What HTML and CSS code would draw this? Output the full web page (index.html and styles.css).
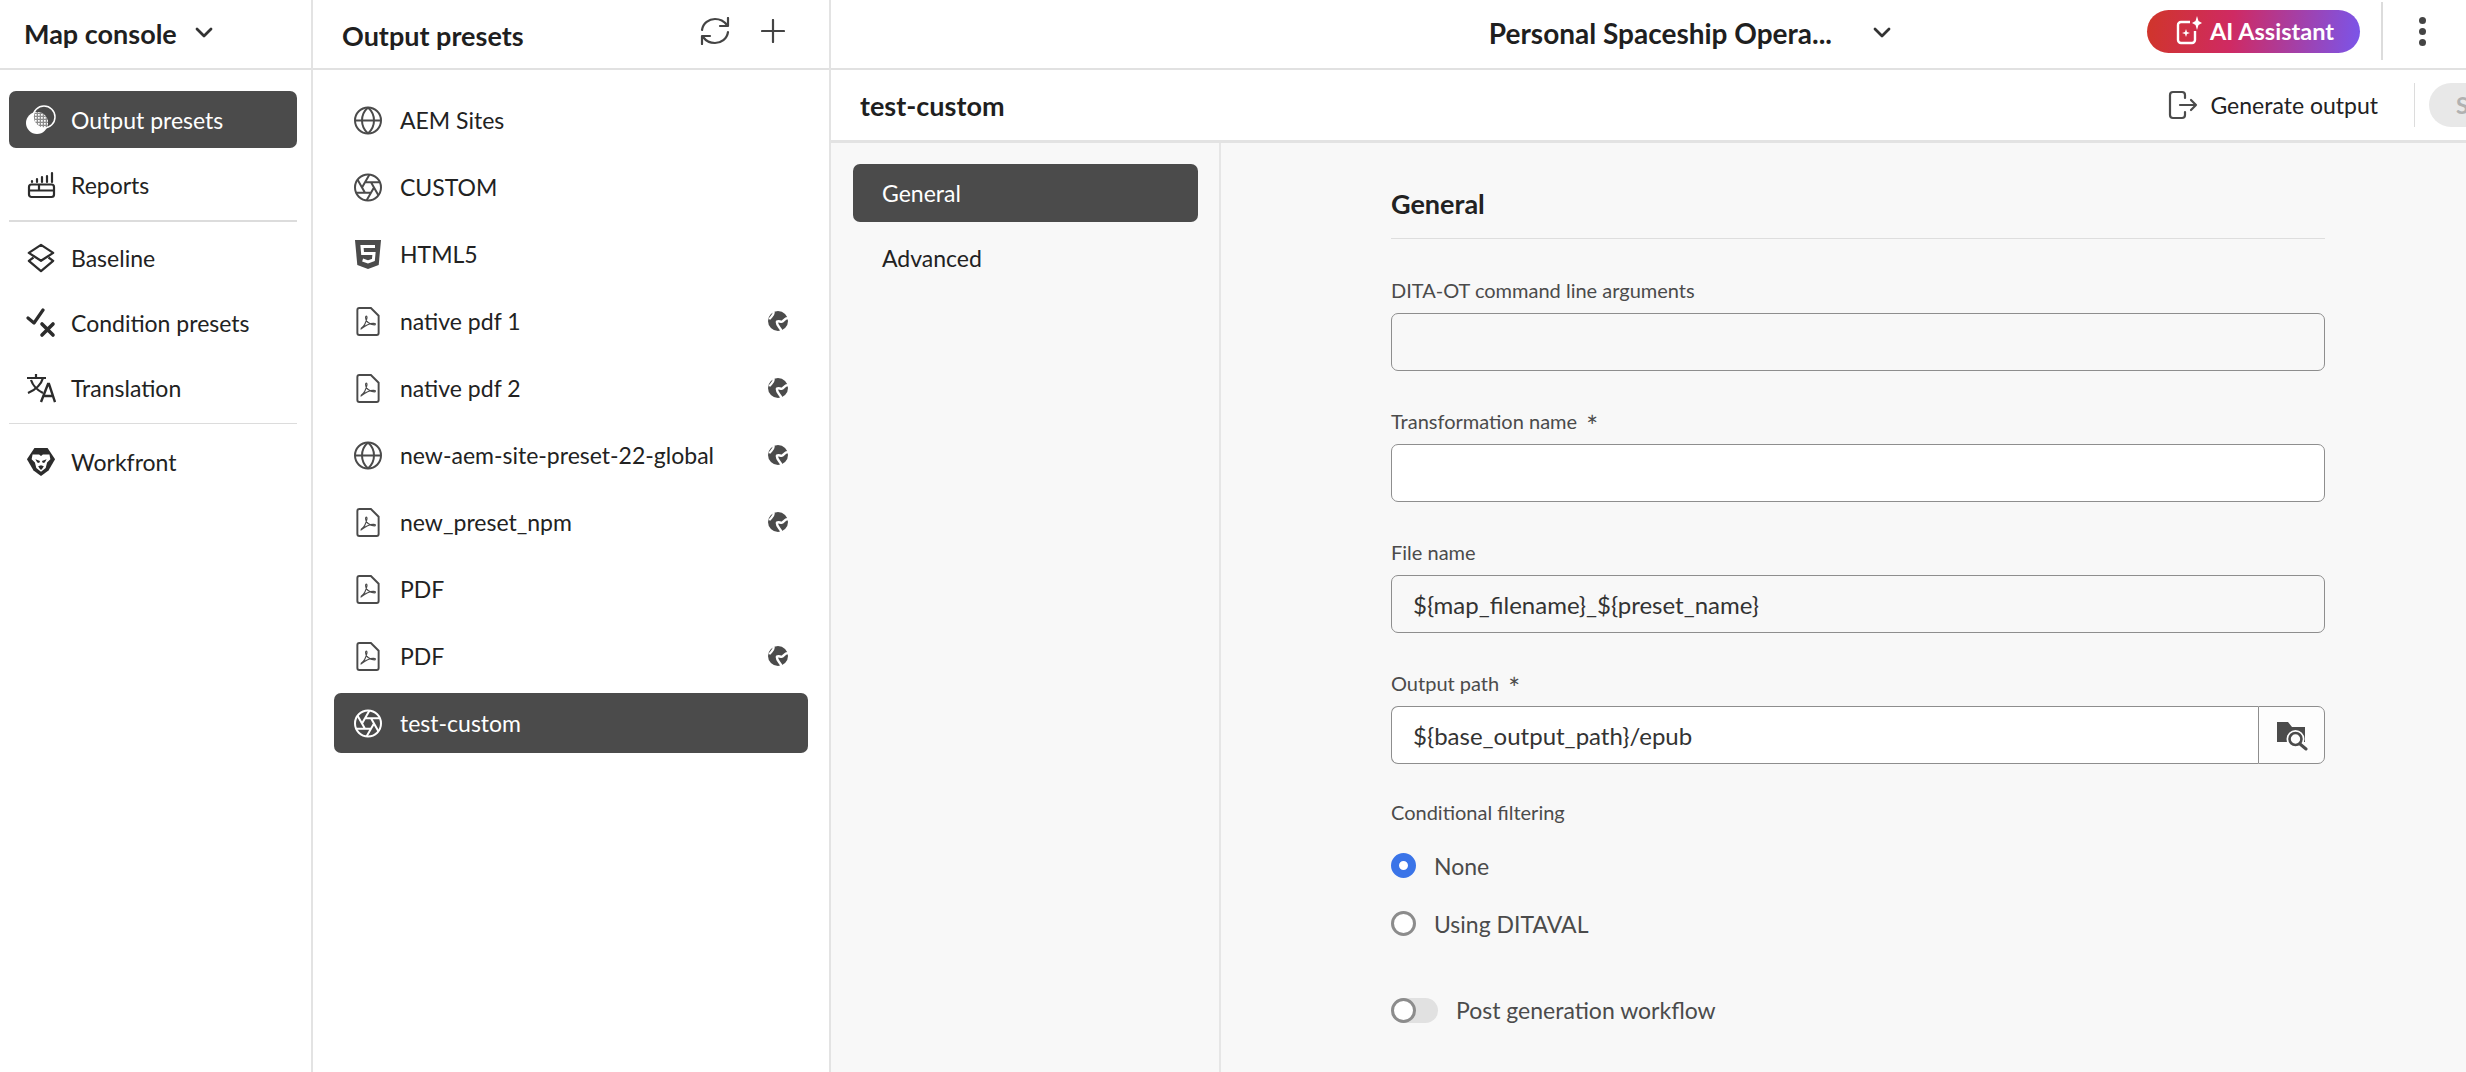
FILE: index.html
```html
<!DOCTYPE html>
<html lang="en">
<head>
  <meta charset="UTF-8" />
  <title>Output presets</title>
  <link rel="stylesheet" href="styles.css">
</head>
<body>

  <!-- Shared icons -->
  <svg class="defs" width="0" height="0">
    <defs>
      <pattern id="dots" width="3" height="3" patternUnits="userSpaceOnUse"><rect width="3" height="3" fill="#8d8d8d"/><rect width="1.700" height="1.700" fill="#fff"/></pattern>
      <clipPath id="lens"><circle cx="18" cy="12" r="11"/></clipPath>
    </defs>
    <symbol id="i-globe" viewBox="0 0 28 28">
      <g fill="none" stroke="currentColor" stroke-width="2">
        <circle cx="14" cy="14" r="13"/><path d="M1 14h26M14 1c-8 7-8 19 0 26M14 1c8 7 8 19 0 26"/>
      </g>
    </symbol>
    <symbol id="i-aperture" viewBox="0 0 28 28">
      <g fill="none" stroke="currentColor" stroke-width="2">
        <circle cx="14" cy="14" r="13"/>
        <path d="M20 14L12.500 26.900M17 19.200H2.100M11 19.200L3.600 6.300M8 14L15.500 1.100M11 8.800H25.900M17 8.800L24.400 21.700"/>
      </g>
    </symbol>
    <symbol id="i-html" viewBox="0 0 26 29">
      <path fill="currentColor" d="M0 0h26l-2.300 25L13 29 2.300 25z"/>
      <path fill="none" stroke="#fff" stroke-width="3" d="M20 6.500H7l.6 7H19l-.6 6.500-5.400 1.800-5.400-1.800"/>
    </symbol>
    <symbol id="i-pdf" viewBox="0 0 24 30">
      <path fill="none" stroke="currentColor" stroke-width="2" d="M3 1h12l8 8v18a2 2 0 0 1-2 2H3a2 2 0 0 1-2-2V3a2 2 0 0 1 2-2z"/>
      <path fill="none" stroke="currentColor" stroke-width="1.200" d="M5 22c3-2 5-6 6-11 0-2-1.500-2-1.500 0 0 4 4 7 9 7.500 1.500 0 1.500-1.500 0-1.500-4-.5-9 2-13.500 5.500z"/>
    </symbol>
    <symbol id="i-earth" viewBox="0 0 20 20">
      <circle cx="10" cy="10" r="10" fill="currentColor"/>
      <g fill="none" stroke="#fff" stroke-linecap="round">
        <path stroke-width="2.200" d="M5.500 1C6.500 3 4 5 2 7.500"/>
        <path stroke-width="2.400" d="M13.500 20C12 16 8 14 9 10.500c2-1 4 1 5.500 0S17 7 20.500 7"/>
      </g>
    </symbol>
    <symbol id="i-chevron" viewBox="0 0 18 12">
      <path fill="none" stroke="currentColor" stroke-width="2.800" stroke-linecap="round" stroke-linejoin="round" d="M2 2l7 7 7-7"/>
    </symbol>
  </svg>

  <!-- Map console nav -->
  <nav class="nav">
    <div class="nav-head">
      <span class="nav-title">Map console</span>
      <svg class="chev"><use href="#i-chevron"/></svg>
    </div>
    <div class="nav-items">
      <a class="nav-item active">
        <svg class="nav-icon" viewBox="0 0 30 30">
          <circle cx="11" cy="18" r="11" fill="#fff"/>
          <circle cx="11" cy="18" r="11" fill="url(#dots)" clip-path="url(#lens)"/>
          <circle cx="18" cy="12" r="11" fill="none" stroke="#fff" stroke-width="1.500"/>
        </svg>
        Output presets
      </a>
      <a class="nav-item">
        <svg class="nav-icon" viewBox="0 0 30 30">
          <path fill="none" stroke="currentColor" stroke-width="2.200" stroke-linecap="round" d="M6 11v1M11 9v3M16 7v5M21 6v6M26 3v9"/>
          <rect x="3" y="14.500" width="25" height="12.500" rx="2.500" fill="none" stroke="currentColor" stroke-width="2.200"/>
          <path fill="none" stroke="currentColor" stroke-width="2.200" d="M3 20.500h25M13 14.500v6"/>
        </svg>
        Reports
      </a>
      <div class="nav-sep thick"></div>
      <a class="nav-item">
        <svg class="nav-icon" viewBox="0 0 30 32">
          <g fill="none" stroke="currentColor" stroke-width="2.400" stroke-linejoin="round">
            <path d="M15 2L28 10.500 15 19 2 10.500z"/>
            <path d="M7 15.500L2 19l13 11 13-11-5-3.500"/>
          </g>
        </svg>
        Baseline
      </a>
      <a class="nav-item">
        <svg class="nav-icon" viewBox="0 0 30 30">
          <path fill="none" stroke="currentColor" stroke-width="3.200" stroke-linecap="round" stroke-linejoin="round" d="M2 10l6 5L17 2"/>
          <path fill="none" stroke="currentColor" stroke-width="3.600" stroke-linecap="round" d="M16 16l11 11M27 16L16 27"/>
        </svg>
        Condition presets
      </a>
      <a class="nav-item">
        <svg class="nav-icon" viewBox="0 0 30 30">
          <path fill="none" stroke="currentColor" stroke-width="2.200" d="M1 5h19M10 1v4M17 5C15 12 9 17 2 20M5 7c2 6 6 10 12 13"/>
          <path fill="none" stroke="currentColor" stroke-width="2.400" d="M15 29l7-18h1l6 18M17.500 23h9.500"/>
        </svg>
        Translation
      </a>
      <div class="nav-sep last"></div>
      <a class="nav-item">
        <svg class="nav-icon" viewBox="0 0 30 32">
          <path fill="#2c2c2c" d="M8 1h14l8 12-7 12-8 6-8-6-7-12z"/>
          <path fill="#fff" d="M6 8h7l2 1.500L17 8h7l1 5-3.500 3.500-1.500 6-5 4-5-4-1.500-6L5 13z"/>
          <path fill="#2c2c2c" d="M9 13l5 2-1 2-2-.5zM21 13l-5 2 1 2 2-.5zM12 20.500l3-1 3 1-1.500 2.500L15 24.500 13.500 23z"/>
        </svg>
        Workfront
      </a>
    </div>
  </nav>

  <!-- Preset list -->
  <section class="presets">
    <div class="presets-head">
      <span class="presets-title">Output presets</span>
      <button class="icon-btn">
        <svg width="30" height="28" viewBox="0 0 30 28" fill="none" stroke="currentColor" stroke-width="2.200" stroke-linecap="round" stroke-linejoin="round">
          <path d="M2 13C3 6 9 2 15 2c5 0 9 2 12 6M28 15c-1 7-7 11-13 11-5 0-9-2-12-6"/>
          <path d="M28 1v8h-8M2 27v-8h8"/>
        </svg>
      </button>
      <button class="icon-btn">
        <svg width="24" height="24" viewBox="0 0 24 24" fill="none" stroke="currentColor" stroke-width="2.200" stroke-linecap="round">
          <path d="M12 1v22M1 12h22"/>
        </svg>
      </button>
    </div>
    <ul class="preset-list">
      <li class="preset"><svg class="p-icon"><use href="#i-globe"/></svg><span class="p-name">AEM Sites</span></li>
      <li class="preset"><svg class="p-icon"><use href="#i-aperture"/></svg><span class="p-name">CUSTOM</span></li>
      <li class="preset"><svg class="p-icon"><use href="#i-html"/></svg><span class="p-name">HTML5</span></li>
      <li class="preset"><svg class="p-icon"><use href="#i-pdf"/></svg><span class="p-name">native pdf 1</span><svg class="p-global"><use href="#i-earth"/></svg></li>
      <li class="preset"><svg class="p-icon"><use href="#i-pdf"/></svg><span class="p-name">native pdf 2</span><svg class="p-global"><use href="#i-earth"/></svg></li>
      <li class="preset"><svg class="p-icon"><use href="#i-globe"/></svg><span class="p-name">new-aem-site-preset-22-global</span><svg class="p-global"><use href="#i-earth"/></svg></li>
      <li class="preset"><svg class="p-icon"><use href="#i-pdf"/></svg><span class="p-name">new_preset_npm</span><svg class="p-global"><use href="#i-earth"/></svg></li>
      <li class="preset"><svg class="p-icon"><use href="#i-pdf"/></svg><span class="p-name">PDF</span></li>
      <li class="preset"><svg class="p-icon"><use href="#i-pdf"/></svg><span class="p-name">PDF</span><svg class="p-global"><use href="#i-earth"/></svg></li>
      <li class="preset active"><svg class="p-icon"><use href="#i-aperture"/></svg><span class="p-name">test-custom</span></li>
    </ul>
  </section>

  <!-- Main -->
  <main class="main">
    <header class="topbar">
      <span class="map-name">Personal Spaceship Opera...</span>
      <svg class="chev map-chev"><use href="#i-chevron"/></svg>
      <button class="ai-btn">
        <svg width="26" height="30" viewBox="0 0 26 30" fill="none" stroke="#fff" stroke-width="2.400">
          <path d="M14 6H5a3 3 0 0 0-3 3v15a3 3 0 0 0 3 3h11a3 3 0 0 0 3-3v-9"/>
          <path fill="#fff" stroke="none" d="M21 0l1.500 5L26 7l-3.500 2L21 14l-1.500-5L16 7l3.500-2zM10 13l1 3 3 1-3 1-1 3-1-3-3-1 3-1z"/>
        </svg>
        AI Assistant
      </button>
      <span class="top-sep"></span>
      <span class="kebab"><i></i><i></i><i></i></span>
    </header>

    <div class="subbar">
      <span class="preset-name">test-custom</span>
      <a class="gen-btn">
        <svg width="30" height="30" viewBox="0 0 30 30" fill="none" stroke="currentColor" stroke-width="2.200" stroke-linecap="round" stroke-linejoin="round">
          <path d="M17 8V5a3 3 0 0 0-3-3H5a3 3 0 0 0-3 3v20a3 3 0 0 0 3 3h9a3 3 0 0 0 3-3v-3"/>
          <path d="M12 15h16M23 10l5 5-5 5"/>
        </svg>
        Generate output
      </a>
      <span class="sub-sep"></span>
      <button class="save-btn">Save</button>
    </div>

    <div class="content">
      <div class="tabs">
        <a class="tab active">General</a>
        <a class="tab">Advanced</a>
      </div>
      <form class="form">
        <h2 class="form-title">General</h2>

        <label class="fld-label">DITA-OT command line arguments</label>
        <input class="input readonly" type="text">

        <label class="fld-label">Transformation name <b class="req">*</b></label>
        <input class="input" type="text">

        <label class="fld-label">File name</label>
        <input class="input readonly" type="text" value="${map_filename}_${preset_name}">

        <label class="fld-label">Output path <b class="req">*</b></label>
        <div class="path-row">
          <input class="input path" type="text" value="${base_output_path}/epub">
          <button class="browse" type="button">
            <svg width="32" height="32" viewBox="0 0 32 32">
              <path fill="#4b4b4b" d="M1 3h11l4 5h13v15h-9l-3 0H1z"/>
              <circle cx="19.500" cy="20" r="7" fill="#fff" stroke="#fff" stroke-width="4"/>
              <circle cx="19.500" cy="20" r="6" fill="#fdfdfd" stroke="#4b4b4b" stroke-width="2.600"/>
              <path stroke="#4b4b4b" stroke-width="3" stroke-linecap="round" d="M24 25l6 5"/>
            </svg>
          </button>
        </div>

        <label class="fld-label group-label">Conditional filtering</label>
        <div class="radio on"><i></i>None</div>
        <div class="radio"><i></i>Using DITAVAL</div>

        <div class="toggle"><i><s></s></i>Post generation workflow</div>
      </form>
    </div>
  </main>

</body>
</html>
```

FILE: styles.css
```css
* { box-sizing: border-box; }
html, body { margin: 0; height: 100%; }
body {
  display: flex; height: 1072px; overflow: hidden;
  font-family: Lato, "Noto Sans", sans-serif;
  font-size: 23px; color: #222; background: #fff;
}
button { font-family: inherit; }
.defs { position: absolute; }

/* Left nav */
.nav { width: 313px; flex: none; border-right: 2px solid #e3e3e3; }
.nav-head {
  height: 70px; border-bottom: 2px solid #e1e1e1;
  display: flex; align-items: center; padding: 0 0 2px 24px;
}
.nav-title { font-size: 27px; font-weight: 700; color: #1f1f1f; }
.chev { width: 18px; height: 12px; color: #333; }
.nav-head .chev { margin-left: 18px; }
.nav-items { padding: 21px 14px 0 9px; }
.nav-item {
  display: flex; align-items: center; gap: 15px; height: 57px;
  padding-left: 17px; border-radius: 7px; margin-bottom: 8px;
}
.nav-item.active { background: #4b4b4b; color: #fff; }
.nav-icon { width: 30px; height: 30px; flex: none; color: #2c2c2c; }
.nav-sep { height: 1px; background: #dcdcdc; margin: -1px 0 7px; }
.nav-sep.thick { height: 2px; }
.nav-sep.last { margin-bottom: 9px; }

/* Presets panel */
.presets { width: 518px; flex: none; border-right: 2px solid #e3e3e3; }
.presets-head {
  height: 70px; border-bottom: 2px solid #e1e1e1;
  display: flex; align-items: center; padding: 2px 0 0 29px;
}
.presets-title { font-size: 27px; font-weight: 700; color: #1f1f1f; margin-right: auto; }
.icon-btn { border: 0; background: none; padding: 0; color: #444; display: flex; margin-top: -8px; }
.icon-btn:nth-of-type(1) { margin-right: 31px; }
.icon-btn:nth-of-type(2) { margin-right: 44px; }
.preset-list { list-style: none; margin: 0; padding: 20px 21px 0; }
.preset {
  display: flex; align-items: center; height: 60px; margin-bottom: 7px;
  padding: 0 20px 0 20px; border-radius: 7px;
}
.p-icon { width: 28px; height: 29px; color: #4b4b4b; flex: none; margin-right: 18px; }
.p-name { flex: 1; white-space: nowrap; }
.p-global { width: 20px; height: 20px; color: #4b4b4b; flex: none; }
.preset.active { background: #4b4b4b; color: #fff; }
.preset.active .p-icon { color: #fff; }

/* Top bars */
.main { flex: 1; min-width: 0; display: flex; flex-direction: column; overflow: hidden; background: #f8f8f8; }
.topbar {
  height: 70px; flex: none; background: #fff; border-bottom: 2px solid #e1e1e1;
  display: flex; align-items: center; justify-content: flex-end;
  padding: 0 40px 2px 0;
}
.map-name { font-size: 28px; font-weight: 700; color: #1f1f1f; }
.map-chev { margin: 0 0 0 41px; }
.ai-btn {
  display: flex; align-items: center; gap: 8px;
  width: 213px; height: 43px; padding: 0 0 0 29px; margin: -4px 0 0 256px;
  border: 0; border-radius: 22px; color: #fff; font-size: 23.500px; font-weight: 700;
  background: linear-gradient(96deg, #d0352a 0%, #cf2a63 40%, #7a55ea 100%);
}
.top-sep { width: 2px; height: 58px; background: #dcdcdc; margin: -4px 0 0 21px; }
.kebab { display: flex; flex-direction: column; gap: 4px; margin: -4px 0 0 36px; }
.kebab i { width: 7px; height: 7px; border-radius: 50%; background: #444; }

.subbar {
  height: 73px; flex: none; background: #fff; border-bottom: 3px solid #e3e3e3;
  display: flex; align-items: center; padding-left: 29px;
}
.preset-name { font-size: 27px; font-weight: 700; color: #1f1f1f; margin-right: auto; }
.gen-btn { display: flex; align-items: center; gap: 12px; color: #222; flex: none; }
.gen-btn svg { color: #4b4b4b; }
.sub-sep { width: 1px; height: 44px; background: #dcdcdc; margin-left: 36px; flex: none; }
.save-btn {
  width: 90px; height: 44px; margin-left: 14px; margin-right: -53px; flex: none; border: 0;
  border-radius: 22px; background: #e8e8e8; color: #b1b1b1; font-size: 23px; font-weight: 700;
  text-align: left; padding-left: 27px;
}

/* Content */
.content { flex: 1; display: flex; min-height: 0; }
.tabs { width: 390px; flex: none; border-right: 2px solid #e6e6e6; padding: 21px 21px 0 22px; }
.tab { display: flex; align-items: center; height: 58px; padding-left: 29px; border-radius: 7px; margin-bottom: 7px; color: #222; }
.tab.active { background: #4b4b4b; color: #fff; }

.form { width: 934px; margin-left: 170px; padding-top: 43px; display: flex; flex-direction: column; align-items: stretch; }
.form-title { font-size: 27px; font-weight: 700; line-height: 36px; margin: 0; padding-bottom: 16px; border-bottom: 1px solid #dedede; color: #222; }
.fld-label { font-size: 20px; line-height: 26px; height: 26px; color: #4b4b4b; margin: 37px 0 10px; }
.form-title + .fld-label { margin-top: 38px; }
.req { font-weight: 400; font-size: 28px; line-height: 0; margin-left: 4px; vertical-align: -8px; }
.input {
  height: 58px; width: 100%; border: 1px solid #8e8e8e; border-radius: 7px; background: #fff;
  font: inherit; font-size: 24px; color: #333; padding: 0 21px; outline: none;
}
.input.readonly { background: #f8f8f8; }
.path-row { display: flex; }
.input.path { flex: 1; border-radius: 7px 0 0 7px; border-right: 0; }
.browse {
  width: 67px; height: 58px; flex: none; padding: 0; border: 1px solid #8e8e8e; border-radius: 0 7px 7px 0;
  background: #fdfdfd; display: flex; align-items: center; justify-content: center;
}
.group-label { margin-top: 35px; margin-bottom: 28px; }
.radio { display: flex; align-items: center; gap: 18px; height: 25px; margin-bottom: 33px; color: #4b4b4b; }
.radio i { width: 25px; height: 25px; border-radius: 50%; border: 3px solid #8c8c8c; background: #fff; flex: none; }
.radio.on i { border: 8px solid #3a74e8; }
.toggle { display: flex; align-items: center; gap: 18px; margin-top: 27px; color: #4b4b4b; }
.toggle i { position: relative; width: 47px; height: 25px; border-radius: 13px; background: #e1e1e1; flex: none; }
.toggle s { position: absolute; left: 0; top: 0; width: 25px; height: 25px; border-radius: 50%; border: 3px solid #8c8c8c; background: #fff; }
```
